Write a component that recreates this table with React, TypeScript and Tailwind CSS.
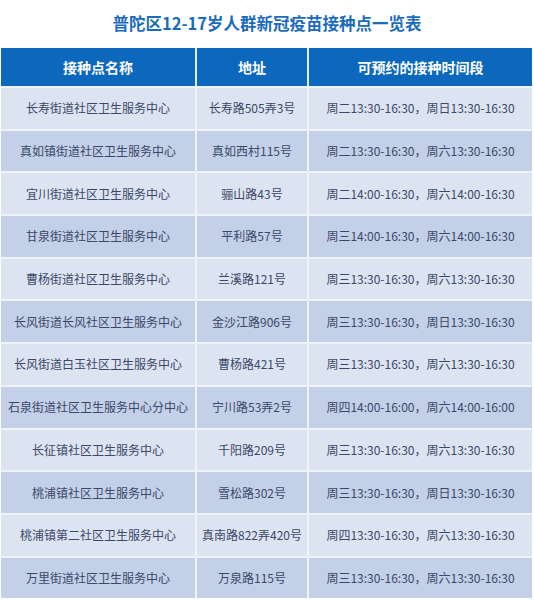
import React from "react";

type Site = {
  name: string;
  address: string;
  hours: string;
};

const sites: Site[] = [
  { name: "长寿街道社区卫生服务中心", address: "长寿路505弄3号", hours: "周二13:30-16:30，周日13:30-16:30" },
  { name: "真如镇街道社区卫生服务中心", address: "真如西村115号", hours: "周二13:30-16:30，周六13:30-16:30" },
  { name: "宜川街道社区卫生服务中心", address: "骊山路43号", hours: "周二14:00-16:30，周六14:00-16:30" },
  { name: "甘泉街道社区卫生服务中心", address: "平利路57号", hours: "周三14:00-16:30，周六14:00-16:30" },
  { name: "曹杨街道社区卫生服务中心", address: "兰溪路121号", hours: "周三13:30-16:30，周六13:30-16:30" },
  { name: "长风街道长风社区卫生服务中心", address: "金沙江路906号", hours: "周三13:30-16:30，周日13:30-16:30" },
  { name: "长风街道白玉社区卫生服务中心", address: "曹杨路421号", hours: "周三13:30-16:30，周六13:30-16:30" },
  { name: "石泉街道社区卫生服务中心分中心", address: "宁川路53弄2号", hours: "周四14:00-16:00，周六14:00-16:00" },
  { name: "长征镇社区卫生服务中心", address: "千阳路209号", hours: "周三13:30-16:30，周六13:30-16:30" },
  { name: "桃浦镇社区卫生服务中心", address: "雪松路302号", hours: "周三13:30-16:30，周日13:30-16:30" },
  { name: "桃浦镇第二社区卫生服务中心", address: "真南路822弄420号", hours: "周四13:30-16:30，周六13:30-16:30" },
  { name: "万里街道社区卫生服务中心", address: "万泉路115号", hours: "周三13:30-16:30，周六13:30-16:30" },
];

const font = { fontFamily: '"Noto Sans CJK SC", "Noto Sans", sans-serif' };

const Cell = ({ children, dark }: { children: React.ReactNode; dark: boolean }) => (
  <div
    className={`flex items-center justify-center whitespace-nowrap text-[12px] text-[#3a4869] ${
      dark ? "bg-[#c4d0e8]" : "bg-[#dde4f1]"
    }`}
  >
    {children}
  </div>
);

export default function App() {
  return (
    <div className="w-[534px] h-[600px] bg-white overflow-hidden" style={font}>
      <h1 className="h-[48px] flex items-center justify-center text-[16.5px] font-bold text-[#1a6cbb] leading-none pb-[1px]">
        普陀区12-17岁人群新冠疫苗接种点一览表
      </h1>

      <div className="ml-[1px] w-[531px] bg-[#eef2f9]">
        <div className="grid grid-cols-[194px_110px_223px] gap-x-[2px] h-[38px] bg-[#e4ecf7]">
          {["接种点名称", "地址", "可预约的接种时间段"].map((h) => (
            <div
              key={h}
              className="flex items-center justify-center bg-[#0b68bd] text-white text-[14px] font-bold"
            >
              {h}
            </div>
          ))}
        </div>

        {sites.map((s, i) => (
          <div
            key={s.name}
            className="grid grid-cols-[194px_110px_223px] gap-x-[2px] h-[42.7px] pt-[2px]"
          >
            <Cell dark={i % 2 === 1}>{s.name}</Cell>
            <Cell dark={i % 2 === 1}>{s.address}</Cell>
            <Cell dark={i % 2 === 1}>{s.hours}</Cell>
          </div>
        ))}
      </div>
    </div>
  );
}
